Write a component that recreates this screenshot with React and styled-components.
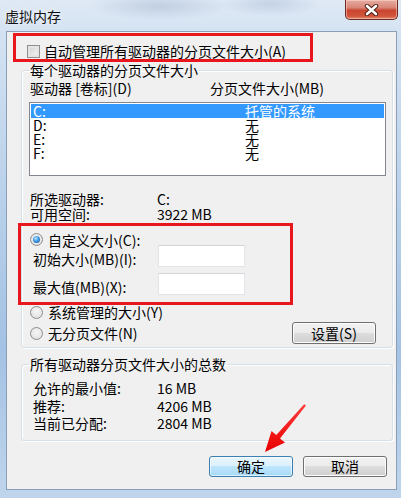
import React from 'react';
import styled, { createGlobalStyle } from 'styled-components';

const GlobalStyle = createGlobalStyle`
  html, body { margin: 0; padding: 0; }
  body {
    font-family: "Noto Sans CJK SC", "Noto Sans", sans-serif;
    font-size: 14px;
    color: #000;
    background: #fff;
  }
  #root { width: 401px; height: 498px; }
  * { box-sizing: border-box; }
`;

const Window = styled.div`
  position: relative;
  width: 401px;
  height: 498px;
  display: flex;
  flex-direction: column;
  overflow: hidden;
  background:
    radial-gradient(ellipse 70px 14px at 160px 6px, rgba(140, 160, 190, 0.35), transparent),
    radial-gradient(ellipse 50px 12px at 270px 4px, rgba(150, 170, 200, 0.35), transparent),
    linear-gradient(180deg, #dfe9f5 0%, #d3e2f2 7%, #bcd3eb 35%, #a4c2e4 70%, #bfd5ec 100%);
`;

const TitleBar = styled.div`
  height: 31px;
  display: flex;
  justify-content: space-between;
  align-items: flex-start;
  flex: none;
`;

const Title = styled.div`
  padding: 8px 0 0 5px;
  line-height: 16px;
  font-size: 14px;
  color: #111;
  text-shadow: 0 0 6px rgba(255, 255, 255, 0.9);
`;

const CloseButton = styled.div`
  width: 53px;
  height: 20px;
  margin-right: 3px;
  border: 1px solid #6b2a22;
  border-top: none;
  border-radius: 0 0 5px 5px;
  background: linear-gradient(180deg, #e7ada3 0%, #d88677 40%, #c9452f 55%, #d2553c 85%, #e48a6d 100%);
  box-shadow: inset 0 0 0 1px rgba(255, 220, 210, 0.5);
  display: flex;
  align-items: center;
  justify-content: center;
`;

const Client = styled.div`
  flex: 1;
  margin: 0 4px 8px 6px;
  border: 1px solid #8c9fb8;
  background: #f0f0f0;
  padding-top: 11px;
  display: flex;
  flex-direction: column;
`;

const CheckRow = styled.div`
  display: flex;
  align-items: center;
  height: 16px;
  line-height: 16px;
  margin-left: 20px;
  gap: 4px;
`;

const CheckBox = styled.span`
  width: 13px;
  height: 13px;
  border: 1px solid #8f8f8f;
  background: #f4f4f4;
  box-shadow: inset 0 0 0 2px #e4e4e4;
  background-image: linear-gradient(135deg, #cfcfcf, #f8f8f8);
  background-clip: content-box;
  padding: 2px;
`;

const Group = styled.fieldset`
  margin: ${(p) => p.$mt}px 3px 0 14px;
  padding: 0 6px ${(p) => p.$pb}px 7px;
  border: 1px solid #d5dfe5;
  border-radius: 3px;
  min-width: 0;
  box-shadow: inset 1px 1px 0 #fff, 1px 1px 0 #fff;
`;

const Legend = styled.legend`
  padding: 0 1px;
  line-height: 14px;
  font-size: 14px;
`;

const HeaderRow = styled.div`
  display: grid;
  grid-template-columns: 180px 1fr;
  margin-top: 3px;
  padding-left: 1px;
  line-height: 16px;
`;

const ListBox = styled.div`
  margin-top: 6px;
  height: 74px;
  border: 1px solid #828790;
  background: #fff;
  padding: 1px;
`;

const ListRow = styled.div`
  display: grid;
  grid-template-columns: 212px 1fr;
  height: 14px;
  line-height: 14px;
  padding-left: 2px;
  background: ${(p) => (p.$selected ? '#3399ff' : 'transparent')};
  color: ${(p) => (p.$selected ? '#fff' : '#000')};
`;

const InfoBlock = styled.div`
  margin-top: ${(p) => p.$mt}px;
  padding-left: ${(p) => p.$pl}px;
  display: grid;
  grid-template-columns: ${(p) => p.$col}px 1fr;
  line-height: ${(p) => p.$lh}px;
`;

const RadioRow = styled.div`
  display: flex;
  align-items: center;
  height: ${(p) => p.$h}px;
  line-height: 16px;
  margin-top: ${(p) => p.$mt}px;
  padding-left: 1px;
  gap: 5px;
`;

const Radio = styled.span`
  width: 13px;
  height: 13px;
  border-radius: 50%;
  border: 1px solid #8c8c8c;
  background: radial-gradient(circle at 50% 40%, #f6f6f6 0%, #dcdcdc 100%);
  display: flex;
  align-items: center;
  justify-content: center;
  flex: none;
  &::after {
    content: '';
    width: 7px;
    height: 7px;
    border-radius: 50%;
    display: ${(p) => (p.$checked ? 'block' : 'none')};
    background: radial-gradient(circle at 40% 35%, #b9e3ff 0%, #3d9ae6 45%, #16508f 100%);
  }
`;

const FieldRow = styled.div`
  display: grid;
  grid-template-columns: 129px 87px;
  align-items: end;
  height: 22px;
  margin-top: ${(p) => p.$mt}px;
`;

const FieldLabel = styled.span`
  padding-left: 4px;
  line-height: 16px;
`;

const TextInput = styled.div`
  height: 22px;
  background: #fff;
  border: 1px solid #e1e5ea;
  border-top-color: #d2d6db;
`;

const Button = styled.div`
  width: 84px;
  height: ${(p) => p.$h || 21}px;
  border: 1px solid ${(p) => (p.$default ? '#3c7fb1' : '#707070')};
  border-radius: 3px;
  display: flex;
  align-items: center;
  justify-content: center;
  line-height: 16px;
  background: ${(p) =>
    p.$default
      ? 'linear-gradient(180deg, #eaf6fd 0%, #d9f0fc 50%, #bee6fd 50%, #a7d9f5 100%)'
      : 'linear-gradient(180deg, #f2f2f2 0%, #ebebeb 50%, #dddddd 50%, #cfcfcf 100%)'};
  box-shadow: inset 0 0 0 1px ${(p) => (p.$default ? 'rgba(255,255,255,0.6)' : '#fcfcfc')};
  margin-left: ${(p) => p.$ml || 0};
  margin-right: ${(p) => p.$mr || 0}px;
`;

const ButtonBar = styled.div`
  display: flex;
  justify-content: flex-end;
  gap: 10px;
  margin: 15px 9px 0 0;
`;

const Callout = styled.div`
  position: absolute;
  left: ${(p) => p.$x}px;
  top: ${(p) => p.$y}px;
  width: ${(p) => p.$w}px;
  height: ${(p) => p.$h}px;
  border: 3px solid #e8161d;
  pointer-events: none;
`;

const ArrowSvg = styled.svg`
  position: absolute;
  left: 258px;
  top: 400px;
  pointer-events: none;
`;

const drives = [
  { d: 'C:', size: '托管的系统', sel: true },
  { d: 'D:', size: '无' },
  { d: 'E:', size: '无' },
  { d: 'F:', size: '无' },
];

export default function App() {
  return (
    <>
      <GlobalStyle />
      <Window>
        <TitleBar>
          <Title>虚拟内存</Title>
          <CloseButton>
            <svg width="15" height="12" viewBox="0 0 15 12">
              <path d="M3 2 L12 10 M12 2 L3 10" stroke="#4a1a12" strokeWidth="4.4" strokeLinecap="round" />
              <path d="M3 2 L12 10 M12 2 L3 10" stroke="#fff" strokeWidth="2.6" strokeLinecap="round" />
            </svg>
          </CloseButton>
        </TitleBar>
        <Client>
          <CheckRow>
            <CheckBox />
            <span>自动管理所有驱动器的分页文件大小(A)</span>
          </CheckRow>

          <Group $mt={4} $pb={3}>
            <Legend>每个驱动器的分页文件大小</Legend>
            <HeaderRow>
              <span>驱动器 [卷标](D)</span>
              <span>分页文件大小(MB)</span>
            </HeaderRow>
            <ListBox>
              {drives.map((r) => (
                <ListRow key={r.d} $selected={r.sel}>
                  <span>{r.d}</span>
                  <span>{r.size}</span>
                </ListRow>
              ))}
            </ListBox>
            <InfoBlock $mt={16} $pl={1} $col={127} $lh={15}>
              <span>所选驱动器:</span>
              <span>C:</span>
              <span>可用空间:</span>
              <span>3922 MB</span>
            </InfoBlock>
            <RadioRow $h={13} $mt={11}>
              <Radio $checked />
              <span>自定义大小(C):</span>
            </RadioRow>
            <FieldRow $mt={-1}>
              <FieldLabel>初始大小(MB)(I):</FieldLabel>
              <TextInput />
            </FieldRow>
            <FieldRow $mt={6}>
              <FieldLabel>最大值(MB)(X):</FieldLabel>
              <TextInput />
            </FieldRow>
            <RadioRow $h={16} $mt={9}>
              <Radio />
              <span>系统管理的大小(Y)</span>
            </RadioRow>
            <RadioRow $h={22} $mt={2}>
              <Radio />
              <span>无分页文件(N)</span>
              <Button $h={22} $ml="auto" $mr={10}>设置(S)</Button>
            </RadioRow>
          </Group>

          <Group $mt={9} $pb={7}>
            <Legend>所有驱动器分页文件大小的总数</Legend>
            <InfoBlock $mt={9} $pl={4} $col={124} $lh={17.5}>
              <span>允许的最小值:</span>
              <span>16 MB</span>
              <span>推荐:</span>
              <span>4206 MB</span>
              <span>当前已分配:</span>
              <span>2804 MB</span>
            </InfoBlock>
          </Group>

          <ButtonBar>
            <Button $default>确定</Button>
            <Button>取消</Button>
          </ButtonBar>
        </Client>

        <Callout $x={13} $y={33} $w={300} $h={29} />
        <Callout $x={18} $y={223} $w={275} $h={82} />
        <ArrowSvg width="52" height="56" viewBox="258 400 52 56">
          <defs>
            <linearGradient id="arrowFill" x1="0" y1="0" x2="0" y2="1">
              <stop offset="0" stopColor="#ff3b3b" />
              <stop offset="1" stopColor="#e80000" />
            </linearGradient>
          </defs>
          <polygon
            points="265,452 271.5,431 276.3,435 304.2,404.2 306,405.6 280,438.6 285,442.5"
            fill="url(#arrowFill)"
          />
        </ArrowSvg>
      </Window>
    </>
  );
}
